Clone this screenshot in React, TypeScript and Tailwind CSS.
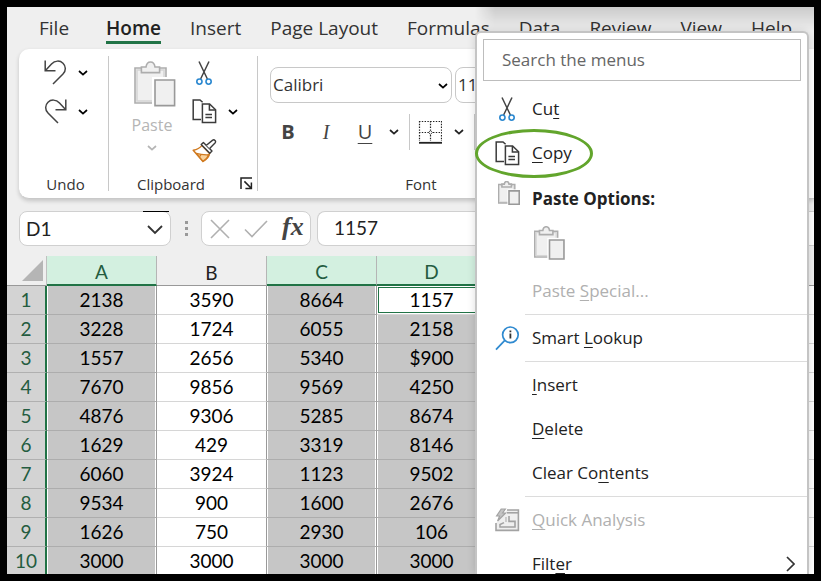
import type { ReactNode } from 'react'
import clsx from 'clsx'

const tabs = ['File', 'Home', 'Insert', 'Page Layout', 'Formulas', 'Data', 'Review', 'View', 'Help']

const columns = [
  { name: 'A', selected: true },
  { name: 'B', selected: false },
  { name: 'C', selected: true },
  { name: 'D', selected: true },
]

const rows = [
  ['2138', '3590', '8664', '1157'],
  ['3228', '1724', '6055', '2158'],
  ['1557', '2656', '5340', '$900'],
  ['7670', '9856', '9569', '4250'],
  ['4876', '9306', '5285', '8674'],
  ['1629', '429', '3319', '8146'],
  ['6060', '3924', '1123', '9502'],
  ['9534', '900', '1600', '2676'],
  ['1626', '750', '2930', '106'],
  ['3000', '3000', '3000', '3000'],
]

function Chevron({ className = 'w-[10px]' }: { className?: string }) {
  return (
    <svg viewBox="0 0 10 6" className={className} fill="none" stroke="currentColor" strokeWidth="1.7">
      <path d="M1 1l4 3.6L9 1" />
    </svg>
  )
}

function UndoIcon({ className }: { className?: string }) {
  return (
    <svg viewBox="0 0 23 25" className={clsx('w-[23px] h-[25px]', className)} fill="none" stroke="#444" strokeWidth="1.5">
      <path d="M1.2 .5V10.8H11.5" />
      <path d="M1.5 10.5L7.5 4C11 .3 16 .3 19 3.2S22.2 10.8 19 14L9 24" />
    </svg>
  )
}

function ScissorsIcon() {
  return (
    <svg viewBox="0 0 18 26" className="w-[18px] h-[26px]" fill="none">
      <path d="M4 1.5L12.4 19M14 1.5L5.6 19" stroke="#444" strokeWidth="1.5" />
      <circle cx="4.4" cy="21.6" r="2.6" stroke="#2b88d0" strokeWidth="1.6" />
      <circle cx="13.6" cy="21.6" r="2.6" stroke="#2b88d0" strokeWidth="1.6" />
    </svg>
  )
}

function CopyIcon() {
  return (
    <svg viewBox="0 0 25 25" className="w-[25px] h-[25px]" fill="none" stroke="#3b3b3b" strokeWidth="1.5">
      <path d="M9 20.6H1.2V.9H8L10.6 3.2" />
      <path d="M10.4 5H17.6L23.6 10.8V23.4H10.4Z" fill="#fff" />
      <path d="M17.4 5V11H23.4" />
      <path d="M13.4 15.4H20M13.4 18.6H20" />
    </svg>
  )
}

function BrushIcon() {
  return (
    <svg viewBox="0 0 25 24" className="w-[25px] h-[24px]" fill="none" strokeLinejoin="round">
      <path d="M1.2 11.2C5 10.6 8 9 10 6.4L17.6 14.4C17 18 14.6 20.6 11 22.4Z" fill="#fff" stroke="#d07a20" strokeWidth="1.5" />
      <path d="M4.4 14.4C8 15.6 12 16 16.8 15.8C15.6 18.8 13.6 20.8 11 22.4Z" fill="#f9d29b" stroke="#d07a20" strokeWidth="1.4" />
      <path d="M7.6 17.6L9 15.6" stroke="#d07a20" strokeWidth="1.2" />
      <path d="M11.4 3.4L20 12L17.8 14.2L9.2 5.6Z" fill="#fff" stroke="#3b3b3b" strokeWidth="1.4" />
      <path d="M14.4 6.2L20.4 1.4C21.4 .6 22.4 .8 23 1.4S23.8 3 23 4L17.6 9.4" fill="#fff" stroke="#3b3b3b" strokeWidth="1.4" />
    </svg>
  )
}

function PasteIcon({ className }: { className: string }) {
  return (
    <svg viewBox="0 0 42 46" className={className} fill="#f0f0f0" stroke="#adadad" strokeWidth="1.6">
      <rect x="1" y="7" width="31" height="35" vectorEffect="non-scaling-stroke" />
      <rect x="3" y="9" width="27" height="31" fill="none" stroke="#d6d6d6" />
      <path d="M7.4 11.6V6H12C12.4 3 14 1 16.5 1S20.6 3 21 6H25.6V11.6Z" vectorEffect="non-scaling-stroke" />
      <path d="M18 16H42V46H18Z" fill="#fff" stroke="none" />
      <rect x="21" y="19" width="19.6" height="25.6" stroke="#999" vectorEffect="non-scaling-stroke" />
    </svg>
  )
}

function BordersIcon() {
  return (
    <svg viewBox="0 0 24 24" className="w-6 h-6" fill="none" stroke="#222">
      <path d="M1 1.5H24M1 12.5H24" strokeWidth="1.2" strokeDasharray="1.4 1.4" />
      <path d="M1.5 1V21M12.5 1V21M23.5 1V21" strokeWidth="1.2" strokeDasharray="1.4 1.4" />
      <path d="M12.5 10.6L14.4 12.5L12.5 14.4L10.6 12.5Z" fill="#fff" strokeWidth=".8" />
      <path d="M1 22.8H24" strokeWidth="1.8" />
    </svg>
  )
}

function LauncherIcon() {
  return (
    <svg viewBox="0 0 13 13" className="w-[13px] h-[13px]" fill="none" stroke="#222" strokeWidth="1.5">
      <path d="M1 12V1H12" />
      <path d="M4.4 4.4L11 11M11.4 5.4V11.4H5.4" />
    </svg>
  )
}

function LookupIcon() {
  return (
    <svg viewBox="0 0 25 25" className="w-[25px] h-[25px]" fill="none" stroke="#2f8ad0" strokeWidth="1.7">
      <circle cx="15.4" cy="8.8" r="7.8" fill="#fff" />
      <path d="M9.8 14.4L1 23.6" />
      <path d="M15.4 7.6V12.6M15.4 4.6V6.2" stroke="#333" strokeWidth="1.8" />
    </svg>
  )
}

function QuickAnalysisIcon() {
  return (
    <svg viewBox="0 0 25 24" className="w-[25px] h-[24px]" fill="none" stroke="#a3a3a3" strokeWidth="1.6">
      <path d="M12 2H23.4V22.4H1V15" fill="#efefef" />
      <path d="M12 4.8H23" />
      <path d="M9 14.6L5 16.6V19H20V13.4H14V8" />
      <path d="M11 9V14" stroke="#c4c4c4" />
      <path d="M6.2 1H10.4L7.6 5H10.6L2.6 13L4.6 8H1.6Z" fill="#c4c4c4" strokeWidth="1.2" />
    </svg>
  )
}

function Divider() {
  return <div className="my-[7px] w-px shrink-0 bg-[#c8c8c8]" />
}

function Ribbon() {
  return (
    <section className="ml-3 flex h-[150px] rounded-l-[10px] border-b border-[#c9c9c9] bg-white shadow-[0_2px_4px_rgba(0,0,0,0.18)]">
      <div className="flex w-[89px] shrink-0 flex-col pt-1 pb-1">
        <button aria-label="Undo" className="flex h-[39px] items-center gap-[11px] pl-[25px]">
          <UndoIcon />
          <Chevron />
        </button>
        <button aria-label="Redo" className="flex h-[39px] items-center gap-[11px] pl-[25px]">
          <UndoIcon className="-scale-x-100" />
          <Chevron />
        </button>
        <div className="mt-auto pl-1 text-center text-[15px] leading-5 text-[#333]">Undo</div>
      </div>
      <Divider />

      <div className="relative flex w-[148px] shrink-0 flex-col pt-1 pb-1">
        <div className="flex pl-5">
          <button disabled className="flex w-[46px] flex-col items-center pt-2 text-base leading-6 text-[#b5b5b5]">
            <PasteIcon className="ml-[6px] w-[42px] h-[46px]" />
            <span className="mt-[6px]">Paste</span>
            <Chevron className="mt-2 w-[10px]" />
          </button>
          <div className="ml-[14px] flex flex-col">
            <button aria-label="Cut" className="flex h-[39px] items-center pl-[6px]">
              <ScissorsIcon />
            </button>
            <button aria-label="Copy" className="flex h-[39px] items-center gap-[11px] pl-[3px]">
              <CopyIcon />
              <Chevron />
            </button>
            <button aria-label="Format Painter" className="flex h-[39px] items-center pl-[3px]">
              <BrushIcon />
            </button>
          </div>
        </div>
        <div className="mt-auto pr-6 text-center text-[15px] leading-5 text-[#333]">Clipboard</div>
        <button aria-label="Clipboard settings" className="absolute right-1 bottom-2">
          <LauncherIcon />
        </button>
      </div>
      <Divider />

      <div className="flex w-[326px] shrink-0 flex-col pt-[18px] pb-1">
        <div className="flex gap-[3px] pl-3">
          <div className="relative w-[182px]">
            <select
              aria-label="Font name"
              className="h-9 w-full appearance-none rounded-lg border border-[#c8c8c8] bg-white px-[2px] text-[17px] text-[#333]"
            >
              <option>Calibri</option>
            </select>
            <Chevron className="pointer-events-none absolute top-4 right-1 w-[10px]" />
          </div>
          <select
            aria-label="Font size"
            className="h-9 w-20 appearance-none rounded-lg border border-[#c8c8c8] bg-white px-[2px] text-[17px] text-[#333]"
          >
            <option>11</option>
          </select>
        </div>
        <div className="mt-[11px] flex h-9 items-center pl-[11px] text-xl text-[#444]">
          <button className="w-[38px] font-bold">B</button>
          <button className="w-[38px] font-['Liberation_Serif',serif] italic">I</button>
          <button className="w-[40px] underline decoration-1 underline-offset-4">U</button>
          <button aria-label="Underline style" className="pl-1 text-[#222]">
            <Chevron />
          </button>
          <div className="ml-[10px] h-9 w-px bg-[#c8c8c8]" />
          <button aria-label="Borders" className="ml-2 flex items-center gap-3 text-[#222]">
            <BordersIcon />
            <Chevron />
          </button>
          <div className="ml-[10px] h-9 w-px bg-[#c8c8c8]" />
        </div>
        <div className="mt-auto text-center text-[15px] leading-5 text-[#333]">Font</div>
      </div>
    </section>
  )
}

function FormulaBar() {
  return (
    <div className="mt-3 ml-3 flex h-[35px] items-stretch font-[Lato,sans-serif] text-[19px]">
      <div className="relative w-[152px] shrink-0">
        <input
          aria-label="Name box"
          defaultValue="D1"
          className="h-full w-full rounded-lg border border-[#d0d0d0] bg-white px-[6px] text-[#222]"
        />
        <div className="absolute top-0 right-[2px] h-px w-[26px] bg-black" />
        <svg viewBox="0 0 16 10" className="pointer-events-none absolute top-[14px] right-2 w-4" fill="none" stroke="#333" strokeWidth="1.8">
          <path d="M1 1l7 7 7-7" />
        </svg>
      </div>
      <div className="flex w-[30px] shrink-0 flex-col items-center justify-center gap-[3px]">
        <div className="size-[3px] bg-[#999]" />
        <div className="size-[3px] bg-[#999]" />
        <div className="size-[3px] bg-[#999]" />
      </div>
      <div className="flex w-[110px] shrink-0 items-center rounded-lg border border-[#d0d0d0] bg-white pl-2">
        <button aria-label="Cancel">
          <svg viewBox="0 0 20 20" className="w-5" stroke="#b0b0b0" strokeWidth="1.6">
            <path d="M1 1L19 19M19 1L1 19" />
          </svg>
        </button>
        <button aria-label="Enter" className="ml-[14px]">
          <svg viewBox="0 0 24 18" className="w-6" fill="none" stroke="#b0b0b0" strokeWidth="1.6">
            <path d="M1 9.5L8 16.5L23 1" />
          </svg>
        </button>
        <button aria-label="Insert function" className="ml-[14px] pb-1 font-['Liberation_Serif',serif] text-[26px] font-bold italic leading-7 text-[#444]">
          fx
        </button>
      </div>
      <input
        aria-label="Formula bar"
        defaultValue="1157"
        className="ml-[6px] min-w-0 flex-1 rounded-l-lg border border-r-0 border-[#d0d0d0] bg-white px-4 text-[#222]"
      />
    </div>
  )
}

function Sheet() {
  return (
    <table className="mt-[10px] w-full table-fixed border-separate border-spacing-0 text-center font-[Lato,sans-serif] text-[19px] leading-7 text-black">
      <colgroup>
        <col className="w-10" />
        {columns.map((col) => (
          <col key={col.name} className="w-[110px]" />
        ))}
        <col />
      </colgroup>
      <thead>
        <tr className="h-[30px] leading-6">
          <th className="border-r border-b border-r-[#c0c0c0] border-b-[#999] p-0">
            <svg viewBox="0 0 21 21" className="ml-auto mr-[3px] w-[21px]">
              <path d="M21 0V21H0Z" fill="#b5b5b5" />
            </svg>
          </th>
          {columns.map((col) => (
            <th
              key={col.name}
              className={clsx(
                'border-r border-r-[#b5b5b5] p-0 pt-1 font-normal',
                col.selected
                  ? 'border-b-2 border-b-[#217346] bg-[#d3f0e0] text-[#245c40]'
                  : 'border-b border-b-[#999] text-[#222]'
              )}
            >
              {col.name}
            </th>
          ))}
          <th className="border-b border-[#999] p-0" />
        </tr>
      </thead>
      <tbody>
        {rows.map((row, r) => (
          <tr key={r} className="h-[29px]">
            <th scope="row" className="border-r-2 border-b border-r-[#217346] border-b-[#b0b0b0] bg-[#d3d3d3] p-0 font-normal text-[#245c40]">
              {r + 1}
            </th>
            {row.map((value, c) => {
              const active = r === 0 && c === 3
              const shaded = columns[c].selected && !active
              return (
                <td
                  key={c}
                  className={clsx(
                    'border-r border-b border-r-[#999] p-0',
                    shaded
                      ? 'border-b-[#adadad] bg-[#c6c6c6] shadow-[inset_1px_0_0_#fff,inset_-1px_0_0_#fff]'
                      : 'border-b-[#d6d6d6] bg-white',
                    active && 'shadow-[inset_0_0_0_1px_#fff,inset_0_0_0_2px_#217346]'
                  )}
                >
                  {value}
                </td>
              )
            })}
            <td className="border-b border-[#d6d6d6] bg-white p-0" />
          </tr>
        ))}
      </tbody>
    </table>
  )
}

function MenuItem({ icon, disabled, children }: { icon?: ReactNode; disabled?: boolean; children: ReactNode }) {
  return (
    <button
      role="menuitem"
      disabled={disabled}
      className="flex h-11 w-full shrink-0 items-center text-left text-[#222] disabled:text-[#b0b0b0]"
    >
      <span className="flex w-[55px] shrink-0 items-center justify-center pl-[5px]">{icon}</span>
      <span className="flex-1">{children}</span>
    </button>
  )
}

function Key({ children }: { children: ReactNode }) {
  return <span className="underline decoration-1 underline-offset-[3px]">{children}</span>
}

function MenuDivider() {
  return <div className="my-px ml-12 h-px shrink-0 bg-[#dcdcdc]" />
}

function ContextMenu() {
  return (
    <div
      role="menu"
      className="absolute top-6 right-[5px] bottom-0 left-[468px] flex flex-col rounded-t-md border-2 border-b-0 border-[#c4c4c4] bg-white text-[17px] leading-[18px] shadow-[0_0_8px_rgba(0,0,0,0.14)]"
    >
      <input
        aria-label="Search the menus"
        placeholder="Search the menus"
        className="mx-[6px] mt-[6px] mb-[6px] h-[42px] shrink-0 border border-[#bdbdbd] px-[18px] pb-[2px] placeholder:text-[#666]"
      />
      <MenuItem icon={<ScissorsIcon />}>Cu<Key>t</Key></MenuItem>
      <div className="relative shrink-0">
        <MenuItem icon={<CopyIcon />}><Key>C</Key>opy</MenuItem>
        {/* Highlight ring */}
        <div className="pointer-events-none absolute -top-[2px] -left-[2px] h-[49px] w-[118px] rounded-[50%] border-3 border-[#62a52c]" />
      </div>
      <div className="mt-[2px] flex h-11 shrink-0 items-center">
        <span className="flex w-[55px] justify-center pb-3 pl-2">
          <PasteIcon className="w-[22px] h-6" />
        </span>
        <span className="font-bold text-[#222]">Paste Options:</span>
      </div>
      <button role="menuitem" disabled aria-label="Paste" className="flex h-12 shrink-0 items-center pb-1 pl-[57px]">
        <PasteIcon className="w-[31px] h-[34px]" />
      </button>
      <MenuItem disabled>Paste <Key>S</Key>pecial...</MenuItem>
      <MenuDivider />
      <MenuItem icon={<LookupIcon />}>Smart <Key>L</Key>ookup</MenuItem>
      <MenuDivider />
      <MenuItem><Key>I</Key>nsert</MenuItem>
      <MenuItem><Key>D</Key>elete</MenuItem>
      <MenuItem>Clear Co<Key>n</Key>tents</MenuItem>
      <MenuDivider />
      <MenuItem icon={<QuickAnalysisIcon />} disabled><Key>Q</Key>uick Analysis</MenuItem>
      <MenuItem>
        <span className="flex items-center justify-between pr-3">
          <span>Filt<Key>e</Key>r</span>
          <svg viewBox="0 0 9 16" className="w-[9px]" fill="none" stroke="#333" strokeWidth="1.7">
            <path d="M1 1l7 7-7 7" />
          </svg>
        </span>
      </MenuItem>
    </div>
  )
}

export default function App() {
  return (
    <div className="h-screen overflow-hidden bg-black p-[7px] font-['Open_Sans',sans-serif]">
      <main className="relative h-full overflow-hidden bg-[#efefef]">
        <nav className="flex h-[42px] gap-[29px] pl-8 text-[19px] text-[#333]">
          {tabs.map((tab) => (
            <button
              key={tab}
              className={clsx(
                'h-[37px] shrink-0 border-b-3 pt-[5px] leading-8',
                tab === 'Home' ? 'ml-2 border-[#217346] font-semibold text-[#222]' : 'border-transparent'
              )}
            >
              {tab}
            </button>
          ))}
        </nav>
        <Ribbon />
        <FormulaBar />
        <Sheet />
        {/* Shade cast from the window's top edge */}
        <div className="pointer-events-none absolute top-0 right-0 left-[468px] h-6 bg-linear-to-b from-black/15 to-transparent [mask-image:linear-gradient(to_right,transparent,black_20px)]" />
        <ContextMenu />
      </main>
    </div>
  )
}
